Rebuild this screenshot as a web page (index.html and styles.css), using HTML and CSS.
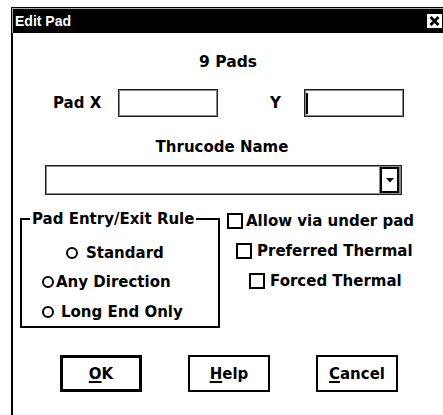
FILE: index.html
```html
<!DOCTYPE html>
<html>
<head>
<meta charset="utf-8">
<title>Edit Pad</title>
<link rel="stylesheet" href="styles.css">
</head>
<body>
<div class="window">
  <div class="titlebar">
    <span class="title">Edit Pad</span>
    <span class="close"><svg width="11" height="10" viewBox="0 0 11 10"><path d="M1.5 1 L9.5 9 M9.5 1 L1.5 9" stroke="#000" stroke-width="2.8" fill="none"/></svg></span>
  </div>
  <div class="content">
    <div class="count">9 Pads</div>
    <div class="pos-row">
      <span class="lbl-x">Pad X</span>
      <div class="edit"></div>
      <span class="lbl-y">Y</span>
      <div class="edit"><span class="caret"></span></div>
    </div>
    <div class="thru-label">Thrucode Name</div>
    <div class="combo">
      <div class="combo-btn"><svg width="8" height="5" viewBox="0 0 8 5"><path d="M0 0 H8 L4 4.5 Z" fill="#000"/></svg></div>
    </div>
    <div class="mid">
      <fieldset class="group">
        <legend>Pad Entry/Exit Rule</legend>
        <div class="radio r1"><span class="dot"></span><span>Standard</span></div>
        <div class="radio r2"><span class="dot"></span><span>Any Direction</span></div>
        <div class="radio r3"><span class="dot"></span><span>Long End Only</span></div>
      </fieldset>
      <div class="checks">
        <div class="check c1"><span class="box"></span><span>Allow via under pad</span></div>
        <div class="check c2"><span class="box"></span><span>Preferred Thermal</span></div>
        <div class="check c3"><span class="box"></span><span>Forced Thermal</span></div>
      </div>
    </div>
    <div class="buttons">
      <div class="btn default"><span><u>O</u>K</span></div>
      <div class="btn"><span><u>H</u>elp</span></div>
      <div class="btn"><span><u>C</u>ancel</span></div>
    </div>
  </div>
</div>
</body>
</html>
```
FILE: styles.css
```css
html, body {
  margin: 0;
  padding: 0;
  background: #fff;
  overflow: hidden;
}
body {
  width: 443px;
  height: 415px;
  font-family: "DejaVu Sans", sans-serif;
  font-weight: bold;
  font-size: 15px;
  color: #000;
}
.window {
  margin: 7px 0 0 11px;
  width: 432px;
  height: 420px;
  border-top: 1px solid #000;
  border-left: 1px solid #000;
  box-sizing: border-box;
  display: flex;
  flex-direction: column;
}
.titlebar {
  height: 25px;
  flex: none;
  box-sizing: border-box;
  border-top: 1px solid #a8a8a8;
  border-left: 1px solid #a8a8a8;
  background: #000;
  display: flex;
  align-items: center;
  justify-content: space-between;
  padding: 0 1px 0 2px;
}
.title {
  font-family: "Liberation Sans", Arial, sans-serif;
  font-size: 14px;
  font-weight: bold;
  color: #fff;
  line-height: 16px;
}
.close {
  width: 15px;
  height: 14px;
  background: #fff;
  display: flex;
  align-items: center;
  justify-content: center;
}
.close svg { display: block; }
.content {
  flex: 1;
  border-left: 1px solid #000;
}
.count {
  margin-top: 19px;
  line-height: 20px;
  font-size: 15.5px;
  text-align: center;
}
.pos-row {
  margin-top: 17px;
  display: flex;
  align-items: center;
  height: 28px;
}
.lbl-x {
  margin-left: 40px;
  width: 65px;
  flex: none;
}
.lbl-y {
  width: 86px;
  box-sizing: border-box;
  padding-left: 52px;
  flex: none;
}
.edit {
  width: 100px;
  height: 28px;
  flex: none;
  box-sizing: border-box;
  border: 1px solid #1e1e1e;
  box-shadow: inset 0 0 0 1px #8a8a8a;
  display: flex;
  align-items: center;
}
.caret {
  display: block;
  width: 2px;
  height: 21px;
  margin-left: 1px;
  background: #000;
}
.thru-label {
  margin-top: 20px;
  line-height: 20px;
  text-align: center;
  padding-right: 12px;
}
.combo {
  margin: 8px 0 0 32px;
  width: 357px;
  height: 30px;
  box-sizing: border-box;
  border: 1px solid #1e1e1e;
  box-shadow: inset 0 0 0 1px #8a8a8a;
  display: flex;
  justify-content: flex-end;
  align-items: center;
  padding-right: 2px;
}
.combo-btn {
  width: 19px;
  height: 26px;
  box-sizing: border-box;
  border: 2px solid #000;
  box-shadow: 0 0 0 1px #8a8a8a;
  display: flex;
  align-items: center;
  justify-content: center;
  background: #fff;
}
.combo-btn svg { display: block; }
.mid {
  margin-top: 15px;
  display: flex;
  align-items: flex-start;
}
.group {
  margin: 0 0 0 7px;
  width: 200px;
  min-width: 0;
  box-sizing: border-box;
  border: 2px solid #000;
  padding: 0 0 4px 8px;
}
.group legend {
  padding: 0 2px;
  line-height: 18px;
}
.radio {
  display: flex;
  align-items: center;
  height: 20px;
  line-height: 20px;
  white-space: nowrap;
}
.dot {
  width: 12px;
  height: 12px;
  box-sizing: border-box;
  border: 2px solid #000;
  border-radius: 50%;
  flex: none;
}
.r1 { margin-top: 15px; margin-left: 36px; gap: 8px; }
.r2 { margin-top: 9px; margin-left: 12px; gap: 2px; }
.r3 { margin-top: 10px; margin-left: 12px; gap: 7px; }
.checks {
  margin-left: 7px;
  display: flex;
  flex-direction: column;
}
.check {
  display: flex;
  align-items: center;
  height: 22px;
  line-height: 22px;
  white-space: nowrap;
}
.box {
  width: 16px;
  height: 16px;
  box-sizing: border-box;
  border: 2px solid #000;
  flex: none;
}
.c1 { gap: 3px; }
.c2 { margin-top: 8px; margin-left: 9px; gap: 5px; }
.c3 { margin-top: 8px; margin-left: 22px; gap: 5px; }
.buttons {
  margin: 27px 0 0 47px;
  display: flex;
  gap: 46px;
}
.btn {
  width: 82px;
  height: 37px;
  box-sizing: border-box;
  border: 2px solid #000;
  display: flex;
  align-items: center;
  justify-content: center;
  line-height: 20px;
}
.btn.default { border-width: 3px; }
.btn u {
  text-decoration-thickness: 2px;
  text-underline-offset: 2px;
}
```
